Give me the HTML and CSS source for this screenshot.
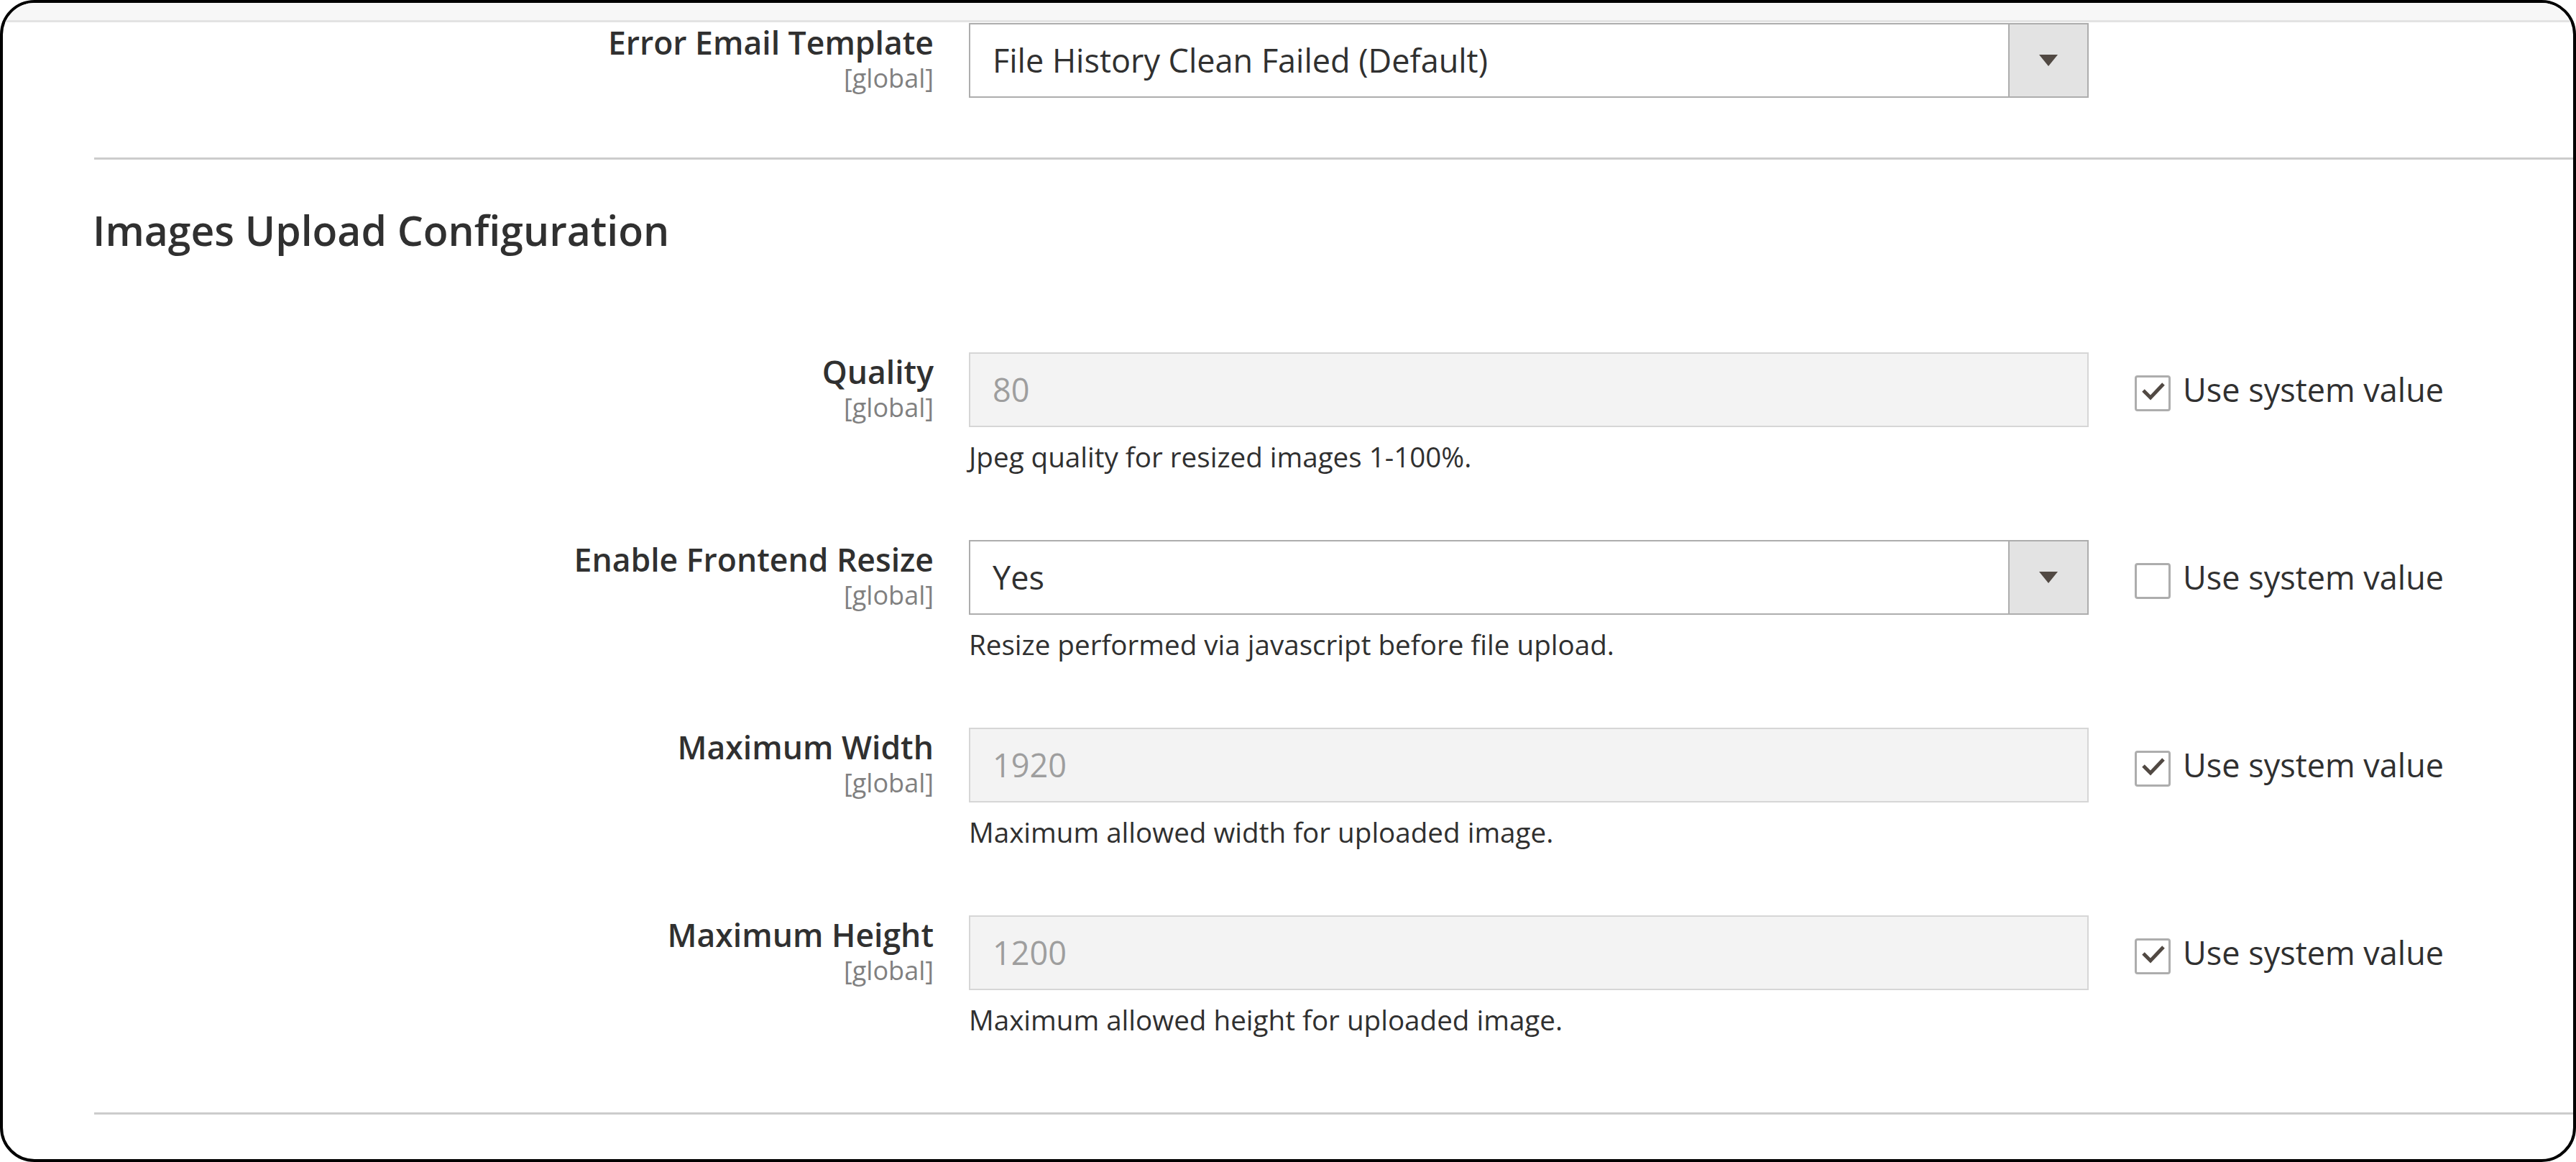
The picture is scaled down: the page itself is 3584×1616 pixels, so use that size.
FILE: index.html
```html
<!DOCTYPE html>
<html lang="en">
<head>
  <meta charset="UTF-8" />
  <meta name="viewport" content="width=device-width, initial-scale=1.0"/>
  <title>Images Upload Configuration</title>
  <link rel="stylesheet" href="styles.css">
</head>
<body>

  <div class="frame">
    <div class="topbar"></div>

    <div class="field field-first">
      <div class="label">
        <span class="label-text">Error Email Template</span>
        <span class="scope">[global]</span>
      </div>
      <div class="control">
        <div class="select">
          <span class="select-value">File History Clean Failed (Default)</span>
          <span class="select-arrow"></span>
        </div>
      </div>
    </div>

    <div class="divider"></div>

    <h2 class="section-title">Images Upload Configuration</h2>

    <div class="fieldset">
      <div class="field">
        <div class="label">
          <span class="label-text">Quality</span>
          <span class="scope">[global]</span>
        </div>
        <div class="control">
          <div class="input disabled">80</div>
          <div class="note">Jpeg quality for resized images 1-100%.</div>
        </div>
        <div class="use-default">
          <span class="checkbox checked">
            <svg width="44" height="44" viewBox="0 0 44 44"><polyline points="9,18 19,28 37,9" fill="none" stroke="#514943" stroke-width="5"/></svg>
          </span>
          <span>Use system value</span>
        </div>
      </div>

      <div class="field">
        <div class="label">
          <span class="label-text">Enable Frontend Resize</span>
          <span class="scope">[global]</span>
        </div>
        <div class="control">
          <div class="select">
            <span class="select-value">Yes</span>
            <span class="select-arrow"></span>
          </div>
          <div class="note">Resize performed via javascript before file upload.</div>
        </div>
        <div class="use-default">
          <span class="checkbox"></span>
          <span>Use system value</span>
        </div>
      </div>

      <div class="field">
        <div class="label">
          <span class="label-text">Maximum Width</span>
          <span class="scope">[global]</span>
        </div>
        <div class="control">
          <div class="input disabled">1920</div>
          <div class="note">Maximum allowed width for uploaded image.</div>
        </div>
        <div class="use-default">
          <span class="checkbox checked">
            <svg width="44" height="44" viewBox="0 0 44 44"><polyline points="9,18 19,28 37,9" fill="none" stroke="#514943" stroke-width="5"/></svg>
          </span>
          <span>Use system value</span>
        </div>
      </div>

      <div class="field">
        <div class="label">
          <span class="label-text">Maximum Height</span>
          <span class="scope">[global]</span>
        </div>
        <div class="control">
          <div class="input disabled">1200</div>
          <div class="note">Maximum allowed height for uploaded image.</div>
        </div>
        <div class="use-default">
          <span class="checkbox checked">
            <svg width="44" height="44" viewBox="0 0 44 44"><polyline points="9,18 19,28 37,9" fill="none" stroke="#514943" stroke-width="5"/></svg>
          </span>
          <span>Use system value</span>
        </div>
      </div>
    </div>

    <div class="divider"></div>
  </div>

</body>
</html>
```

FILE: styles.css
```css
body {
  margin: 0;
  font-family: "Open Sans", "Liberation Sans", sans-serif;
  color: #303030;
  background: #fff;
}

.frame {
  box-sizing: border-box;
  width: 3584px;
  height: 1616px;
  border: 4px solid #000;
  border-radius: 48px;
  overflow: hidden;
  background: #fff;
}

.topbar {
  height: 24px;
  background: #f7f7f7;
  border-bottom: 3px solid #e3e3e3;
}

.divider {
  height: 3px;
  background: #cccccc;
  margin-left: 127px;
}

.section-title {
  margin: 65px 0 136px;
  padding-left: 125px;
  font-size: 57px;
  font-weight: 600;
  line-height: 67px;
}

.field {
  display: grid;
  grid-template-columns: 1295px 1558px auto;
  column-gap: 49px;
  align-items: start;
  margin-bottom: 89px;
}

.field-first {
  margin-top: 1px;
  margin-bottom: 83px;
}

.fieldset .field:last-child {
  margin-bottom: 102px;
}

.label {
  text-align: right;
}

.label-text {
  display: block;
  font-size: 44.5px;
  font-weight: 600;
  line-height: 54px;
}

.scope {
  display: block;
  font-size: 36px;
  line-height: 40px;
  color: #808080;
  margin-top: 3px;
}

.select {
  display: flex;
  box-sizing: border-box;
  height: 104px;
  border: 2px solid #adadad;
  background: #fff;
}

.select-value {
  flex: 1;
  font-size: 45px;
  line-height: 100px;
  padding-left: 31px;
}

.select-arrow {
  width: 108px;
  border-left: 2px solid #adadad;
  background: #e3e3e3;
  display: flex;
  align-items: center;
  justify-content: center;
}

.select-arrow::after {
  content: "";
  border-left: 13px solid transparent;
  border-right: 13px solid transparent;
  border-top: 16px solid #514943;
}

.input {
  box-sizing: border-box;
  height: 104px;
  border: 2px solid #adadad;
  font-size: 45px;
  line-height: 100px;
  padding-left: 31px;
}

.input.disabled {
  border-color: #d6d6d6;
  background: #f3f3f3;
  color: #9e9e9e;
}

.note {
  margin-top: 15px;
  font-size: 38.6px;
  line-height: 53px;
}

.use-default {
  display: flex;
  align-items: center;
  height: 104px;
  margin-left: 15px;
  font-size: 45px;
  line-height: 54px;
}

.checkbox {
  flex: none;
  box-sizing: border-box;
  width: 50px;
  height: 50px;
  border: 3px solid #adadad;
  border-radius: 4px;
  margin-top: 10px;
  margin-right: 17px;
  background: #fff;
}

.checkbox svg {
  display: block;
}
```
